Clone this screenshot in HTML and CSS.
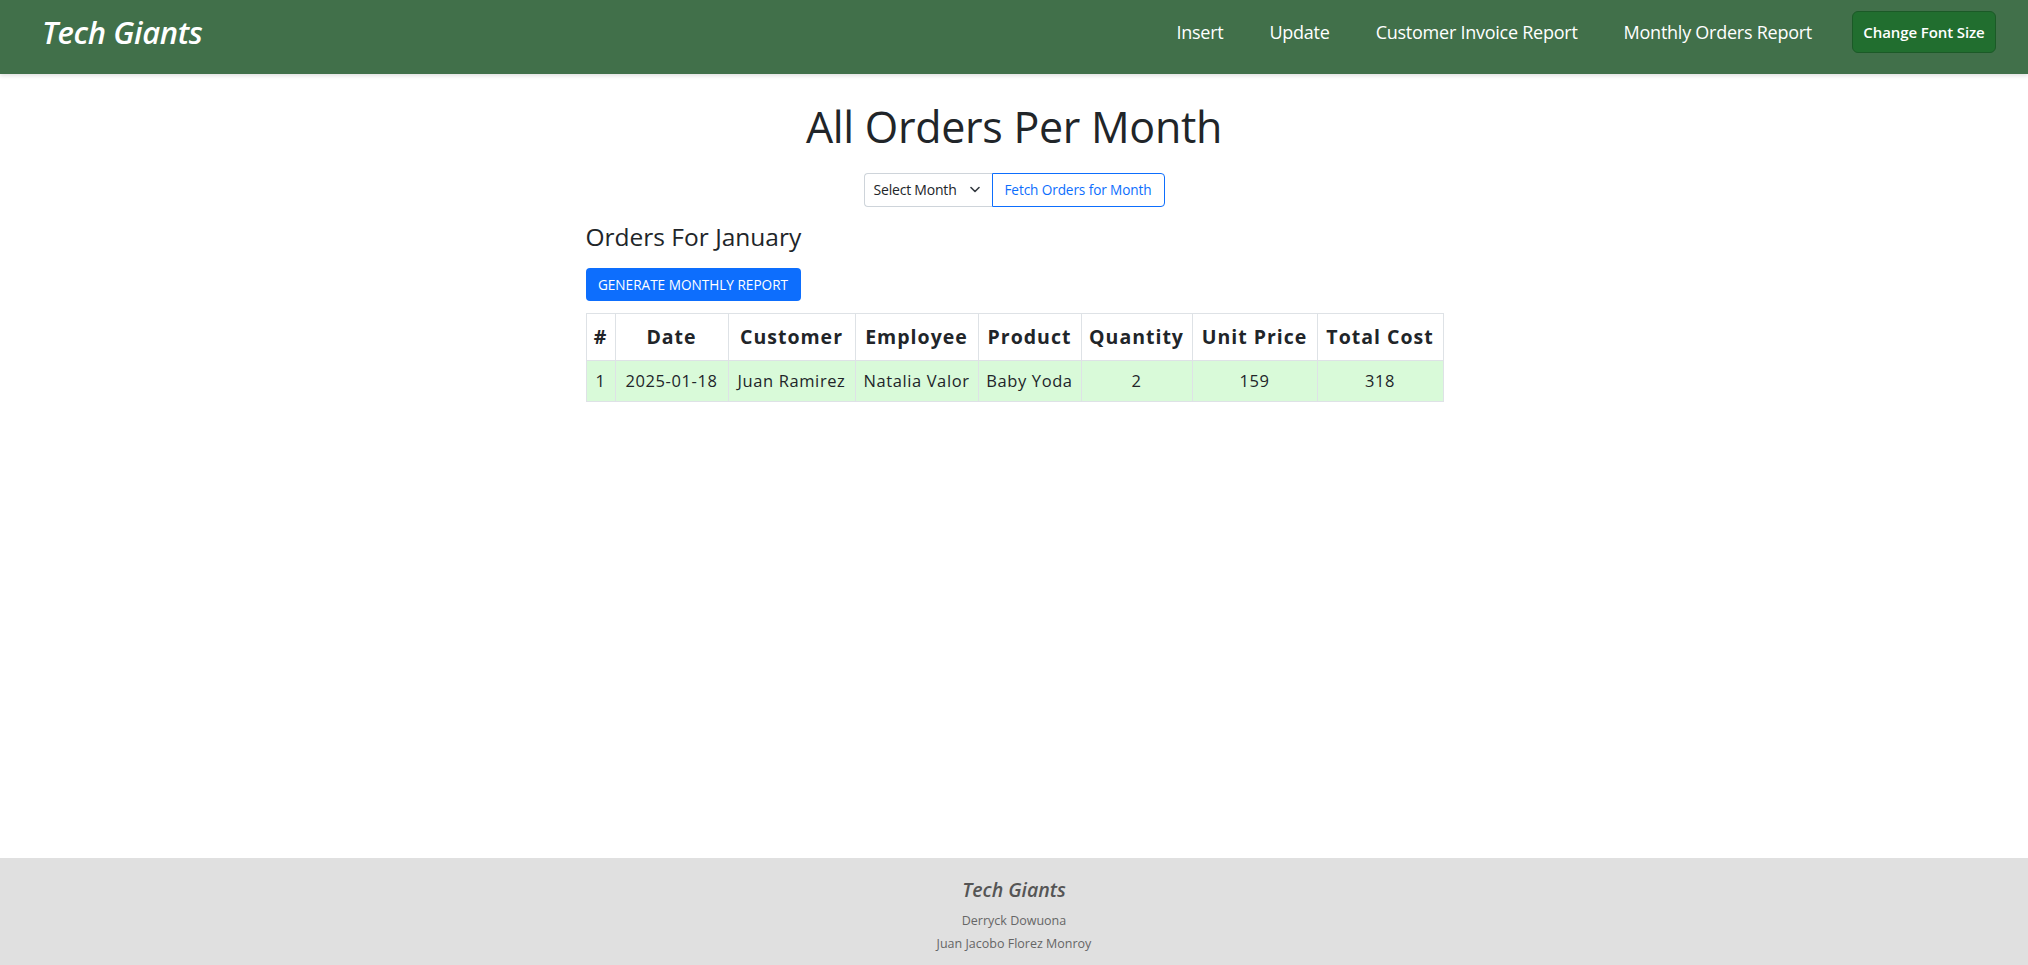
FILE: index.html
```html
<!DOCTYPE html>
<html lang="en">
<head>
<meta charset="utf-8">
<title>All Orders Per Month</title>
<link rel="stylesheet" href="styles.css">
</head>
<body>
<nav class="navbar">
  <a class="brand" href="#">Tech Giants</a>
  <div class="nav-right">
    <ul class="nav-links">
      <li><a href="#">Insert</a></li>
      <li><a href="#">Update</a></li>
      <li><a href="#">Customer Invoice Report</a></li>
      <li><a href="#">Monthly Orders Report</a></li>
    </ul>
    <button class="font-btn" type="button">Change Font Size</button>
  </div>
</nav>
<main class="main">
  <h1 class="page-title">All Orders Per Month</h1>
  <div class="month-group">
    <div class="month-select">
      <span>Select Month</span>
      <svg class="chev" width="10" height="7" viewBox="0 0 10 7"><path d="M1 1.5 L5 5.5 L9 1.5" fill="none" stroke="#343a40" stroke-width="1.6" stroke-linecap="round" stroke-linejoin="round"/></svg>
    </div>
    <button class="fetch-btn" type="button">Fetch Orders for Month</button>
  </div>
  <section class="orders">
    <h3 class="orders-title">Orders For January</h3>
    <button class="report-btn" type="button">GENERATE MONTHLY REPORT</button>
    <table class="orders-table">
      <colgroup>
        <col class="c-num"><col class="c-date"><col class="c-cust"><col class="c-emp"><col class="c-prod"><col class="c-qty"><col class="c-price"><col class="c-total">
      </colgroup>
      <thead>
        <tr><th>#</th><th>Date</th><th>Customer</th><th>Employee</th><th>Product</th><th>Quantity</th><th>Unit Price</th><th>Total Cost</th></tr>
      </thead>
      <tbody>
        <tr><td>1</td><td>2025-01-18</td><td>Juan Ramirez</td><td>Natalia Valor</td><td>Baby Yoda</td><td>2</td><td>159</td><td>318</td></tr>
      </tbody>
    </table>
  </section>
</main>
<footer class="footer">
  <div class="footer-brand">Tech Giants</div>
  <div class="footer-name">Derryck Dowuona</div>
  <div class="footer-name">Juan Jacobo Florez Monroy</div>
</footer>
</body>
</html>
```

FILE: styles.css
```css
* { box-sizing: border-box; }
html, body { margin: 0; padding: 0; }
body {
  font-family: "Open Sans", "Noto Sans", sans-serif;
  color: #212529;
  background: #fff;
  min-height: 100vh;
  display: flex;
  flex-direction: column;
}
.navbar {
  height: 74px;
  background: #41704a;
  display: flex;
  align-items: center;
  justify-content: space-between;
  padding: 0 32px 10px 42px;
  box-shadow: 0 2px 4px rgba(0,0,0,0.12);
}
.brand {
  color: #fff;
  text-decoration: none;
  font-style: italic;
  font-weight: 600;
  font-size: 31px;
  letter-spacing: -0.4px;
}
.nav-right { display: flex; align-items: center; }
.nav-links {
  list-style: none;
  display: flex;
  margin: 0;
  padding: 0;
  margin-right: 17px;
}
.nav-links a {
  display: block;
  color: #fff;
  text-decoration: none;
  font-size: 18px;
  padding: 8px 23px;
  letter-spacing: -0.25px;
}
.font-btn {
  width: 144px;
  height: 42px;
  background: #216e2f;
  border: 1px solid #1b5a27;
  border-radius: 6px;
  color: #fff;
  font-family: inherit;
  font-weight: 600;
  font-size: 15px;
  letter-spacing: -0.1px;
  padding: 0;
}
.main {
  display: flex;
  flex-direction: column;
  align-items: center;
  flex: 1;
}
.page-title {
  margin: 27px 0 0;
  font-size: 43px;
  font-weight: 500;
  line-height: 1.2;
  letter-spacing: -0.3px;
}
.month-group {
  display: flex;
  margin-top: 20px;
  height: 34px;
}
.month-select {
  width: 128px;
  border: 1px solid #ced4da;
  border-right: none;
  border-radius: 4px 0 0 4px;
  display: flex;
  align-items: center;
  justify-content: space-between;
  padding: 0 12px 0 9px;
  font-size: 14px;
  letter-spacing: -0.2px;
  color: #212529;
}
.fetch-btn {
  width: 173px;
  background: #fff;
  border: 1px solid #0d6efd;
  border-radius: 0 4px 4px 0;
  color: #0d6efd;
  font-family: inherit;
  font-size: 13.6px;
  letter-spacing: -0.1px;
  padding: 0;
}
.orders {
  margin-top: 15px;
  width: 857px;
}
.orders-title {
  margin: 0;
  font-size: 24.5px;
  font-weight: 500;
  line-height: 1.2;
}
.report-btn {
  margin-top: 17px;
  width: 215px;
  height: 33px;
  background: #0d6efd;
  border: none;
  border-radius: 4px;
  color: #fff;
  font-family: inherit;
  font-size: 13.6px;
  padding: 0;
  display: block;
}
.orders-table {
  margin-top: 12px;
  border-collapse: collapse;
  table-layout: fixed;
  width: 857px;
}
.c-num { width: 29px; }
.c-date { width: 113px; }
.c-cust { width: 127px; }
.c-emp { width: 123px; }
.c-prod { width: 103px; }
.c-qty { width: 111px; }
.c-price { width: 125px; }
.c-total { width: 126px; }
.orders-table th, .orders-table td {
  border: 1px solid #dee2e6;
  text-align: center;
  padding: 0;
  white-space: nowrap;
}
.orders-table th {
  height: 47px;
  font-size: 19.5px;
  font-weight: 700;
  letter-spacing: 1px;
}
.orders-table td {
  height: 41px;
  font-size: 16.5px;
  background: #d9fad9;
  letter-spacing: 0.6px;
}
.footer {
  height: 107px;
  background: #e0e0e0;
  text-align: center;
  padding-top: 18px;
}
.footer-brand {
  font-style: italic;
  font-weight: 600;
  font-size: 19.5px;
  color: #555;
  line-height: 27px;
  margin-bottom: 6px;
}
.footer-name {
  font-size: 12.5px;
  color: #666;
  line-height: 23px;
}
```
